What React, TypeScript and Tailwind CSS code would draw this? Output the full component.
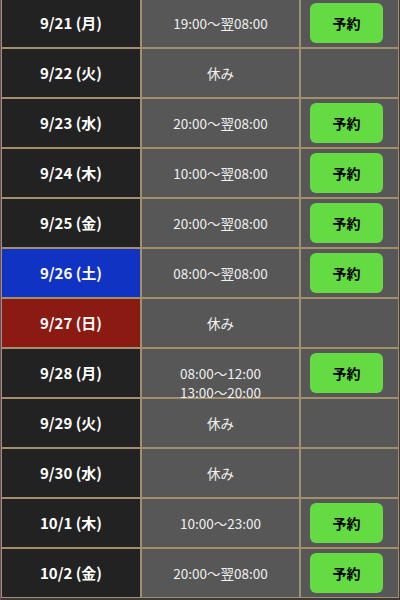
import React from "react";

type Row = { date: string; time: string[]; btn: boolean; bg?: string };

const rows: Row[] = [
  { date: "9/21 (月)", time: ["19:00〜翌08:00"], btn: true },
  { date: "9/22 (火)", time: ["休み"], btn: false },
  { date: "9/23 (水)", time: ["20:00〜翌08:00"], btn: true },
  { date: "9/24 (木)", time: ["10:00〜翌08:00"], btn: true },
  { date: "9/25 (金)", time: ["20:00〜翌08:00"], btn: true },
  { date: "9/26 (土)", time: ["08:00〜翌08:00"], btn: true, bg: "blue" },
  { date: "9/27 (日)", time: ["休み"], btn: false, bg: "red" },
  { date: "9/28 (月)", time: ["08:00〜12:00", "13:00〜20:00"], btn: true },
  { date: "9/29 (火)", time: ["休み"], btn: false },
  { date: "9/30 (水)", time: ["休み"], btn: false },
  { date: "10/1 (木)", time: ["10:00〜23:00"], btn: true },
  { date: "10/2 (金)", time: ["20:00〜翌08:00"], btn: true },
];

export default function App() {
  return (
    <div
      className="w-[400px] h-[600px] overflow-hidden bg-[#3a3a3a] flex"
      style={{ fontFamily: '"Noto Sans CJK JP", "Noto Sans", sans-serif' }}
    >
      <div className="w-[1px] bg-[#6b4a6e] shrink-0" />
      <div className="grid grid-cols-[140px_159px_99px] -mt-[2px] h-fit">
        {rows.map((r) => {
          const dateBg =
            r.bg === "blue" ? "bg-[#1133c4]" : r.bg === "red" ? "bg-[#8a1a12]" : "bg-[#222222]";
          return (
            <React.Fragment key={r.date}>
              <div
                className={`h-[50px] border border-[#a38f6b] ${dateBg} flex items-center justify-center text-white font-bold text-[15px]`}
              >
                {r.date}
              </div>
              {r.time.length > 1 ? (
                <div className="h-[50px] border border-[#a38f6b] bg-[#575757] flex flex-col items-center pt-[15px] text-[#f0f0f0] text-[13.5px] leading-[19px]">
                  {r.time.map((t) => (
                    <span key={t}>{t}</span>
                  ))}
                </div>
              ) : (
                <div className="h-[50px] border border-[#a38f6b] bg-[#575757] flex items-center justify-center text-[#f0f0f0] text-[13.5px]">
                  {r.time[0]}
                </div>
              )}
              <div className="h-[50px] border border-[#a38f6b] bg-[#575757] pt-[4px] pl-[9px]">
                {r.btn && (
                  <div className="w-[73px] h-[40px] rounded-[6px] bg-[#64da43] flex items-center justify-center text-black font-bold text-[14px]">
                    予約
                  </div>
                )}
              </div>
            </React.Fragment>
          );
        })}
      </div>
    </div>
  );
}
